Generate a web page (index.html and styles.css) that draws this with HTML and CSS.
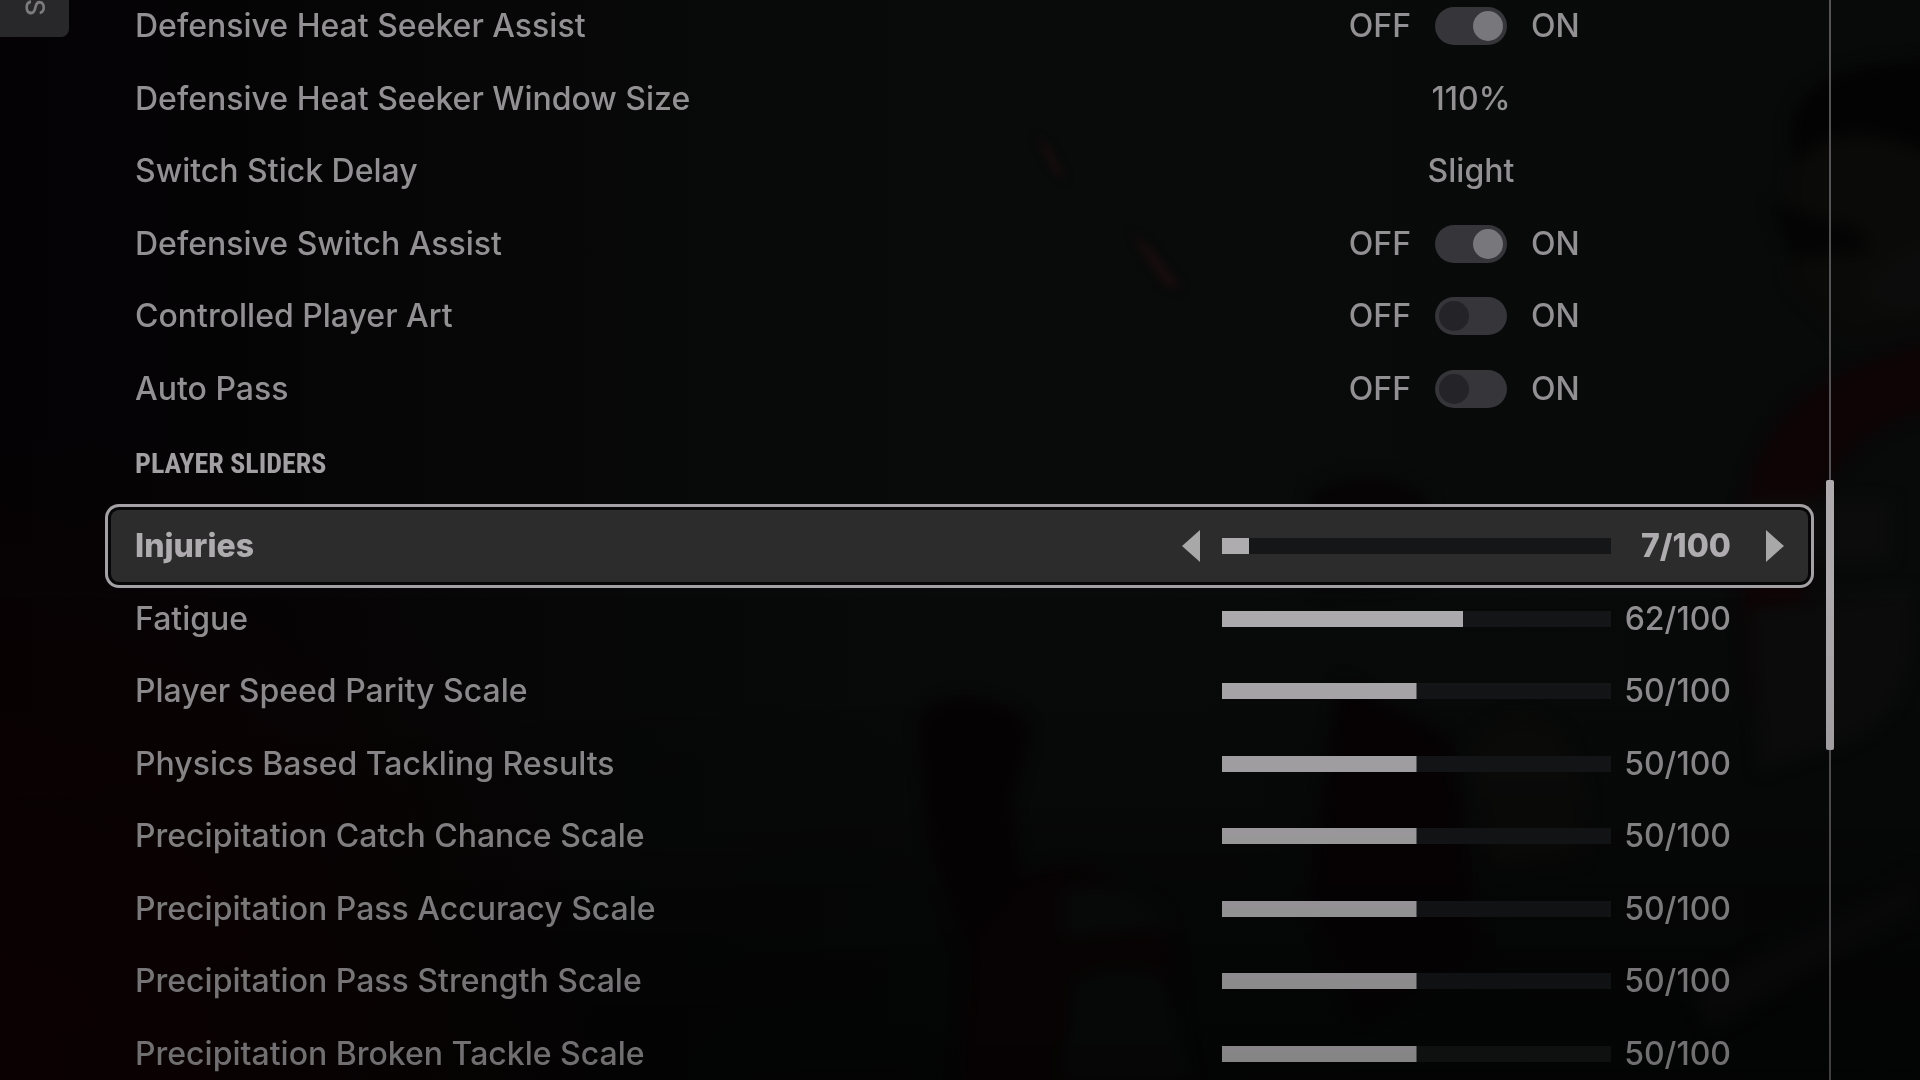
FILE: index.html
```html
<!DOCTYPE html>
<html lang="en">
<head>
  <meta charset="UTF-8">
  <title>Gameplay Settings</title>
  <link rel="stylesheet" href="styles.css">
</head>
<body>
  <svg class="backdrop" viewBox="0 0 1920 1080" preserveAspectRatio="xMidYMid slice" aria-hidden="true">
    <defs>
      <filter id="soft" color-interpolation-filters="sRGB"><feGaussianBlur stdDeviation="8"/></filter>
      <filter id="spark" color-interpolation-filters="sRGB"><feGaussianBlur stdDeviation="4"/></filter>
    </defs>
    <g filter="url(#spark)" fill="#190d0e">
      <path d="M1036 136l14 12 16 32-12-8z"/>
      <path d="M1132 232l22 20 28 36-16-2-24-34z"/>
    </g>
    <g filter="url(#soft)">
      <!-- player on the right -->
      <path d="M1790 130C1800 80 1850 60 1940 60v130c-60-20-110-20-140 20z" fill="#040304"/>
      <path d="M1790 170c40-50 90-40 150-10v160l-90 20-60-60z" fill="#0a0a08"/>
      <path d="M1770 200c20 10 60 20 90 30l10 20-80 10z" fill="#040405"/>
      <path d="M1740 560c0-130 60-190 200-220v70c-70 10-120 50-130 140l-10 190-50-40z" fill="#0e0406"/>
      <path d="M1860 290c20-30 60-50 80-50v60c-20 20-60 20-80-10z" fill="#0c0c0c"/>
      <path d="M1750 500h140v60h-140z" fill="#0c0c0c"/>
      <path d="M1750 610l160-20c10 60 0 120-60 150l-90 30z" fill="#0c0c0c"/>
      <path d="M1690 990l230-120v40l-210 120z" fill="#0a0a0b"/>
      <!-- player by the sliders -->
      <path d="M1310 500c20-30 110-30 120 10l-10 70-100 10z" fill="#060404"/>
      <path d="M1470 750c20-40 80-50 100 0 20 40 20 70 10 110l-90 10z" fill="#0b0b0a"/>
      <path d="M1340 680l110 60 30 220-120 60-50-120z" fill="#070305"/>
      <!-- player in the middle -->
      <path d="M920 720c20-30 80-30 110 10l-20 70 10 100-50 60-40-120z" fill="#060304"/>
      <path d="M1020 880c60-30 110-10 150 60l20 160h-230l10-160z" fill="#090304"/>
      <path d="M1060 890c50-20 90 0 110 40l-110 10z" fill="#090a0a"/>
      <path d="M1060 1080l10-100c30-20 80-20 100 0l20 100z" fill="#080909"/>
    </g>
  </svg>

  <div class="screen">
    <nav class="side">
      <a class="tab" href="#settings">S</a>
    </nav>

    <main class="settings" id="settings">
      <div class="rows">
        <div class="row">
          <label for="heatSeeker">Defensive Heat Seeker Assist</label>
          <div class="switch"><span>OFF</span><input type="checkbox" id="heatSeeker" checked><span>ON</span></div>
        </div>
        <div class="row">
          <span id="windowSize">Defensive Heat Seeker Window Size</span>
          <output class="choice" aria-labelledby="windowSize">110%</output>
        </div>
        <div class="row">
          <span id="stickDelay">Switch Stick Delay</span>
          <output class="choice" aria-labelledby="stickDelay">Slight</output>
        </div>
        <div class="row">
          <label for="switchAssist">Defensive Switch Assist</label>
          <div class="switch"><span>OFF</span><input type="checkbox" id="switchAssist" checked><span>ON</span></div>
        </div>
        <div class="row">
          <label for="playerArt">Controlled Player Art</label>
          <div class="switch"><span>OFF</span><input type="checkbox" id="playerArt"><span>ON</span></div>
        </div>
        <div class="row">
          <label for="autoPass">Auto Pass</label>
          <div class="switch"><span>OFF</span><input type="checkbox" id="autoPass"><span>ON</span></div>
        </div>
      </div>

      <h2>PLAYER SLIDERS</h2>

      <div class="rows">
        <div class="row selected">
          <label for="injuries">Injuries</label>
          <div class="slider">
            <button class="arrow" aria-label="Decrease"><svg viewBox="0 0 18 32"><path d="M18 0v32L0 16z"/></svg></button>
            <input type="range" id="injuries" min="0" max="100" value="7" style="--fill: 7%">
            <output for="injuries">7/100</output>
            <button class="arrow next" aria-label="Increase"><svg viewBox="0 0 18 32"><path d="M0 0v32l18-16z"/></svg></button>
          </div>
        </div>
        <div class="row">
          <label for="fatigue">Fatigue</label>
          <div class="slider">
            <input type="range" id="fatigue" min="0" max="100" value="62" style="--fill: 62%">
            <output for="fatigue">62/100</output>
          </div>
        </div>
        <div class="row">
          <label for="speedParity">Player Speed Parity Scale</label>
          <div class="slider">
            <input type="range" id="speedParity" min="0" max="100" value="50" style="--fill: 50%">
            <output for="speedParity">50/100</output>
          </div>
        </div>
        <div class="row">
          <label for="tackling">Physics Based Tackling Results</label>
          <div class="slider">
            <input type="range" id="tackling" min="0" max="100" value="50" style="--fill: 50%">
            <output for="tackling">50/100</output>
          </div>
        </div>
        <div class="row">
          <label for="catchChance">Precipitation Catch Chance Scale</label>
          <div class="slider">
            <input type="range" id="catchChance" min="0" max="100" value="50" style="--fill: 50%">
            <output for="catchChance">50/100</output>
          </div>
        </div>
        <div class="row">
          <label for="passAccuracy">Precipitation Pass Accuracy Scale</label>
          <div class="slider">
            <input type="range" id="passAccuracy" min="0" max="100" value="50" style="--fill: 50%">
            <output for="passAccuracy">50/100</output>
          </div>
        </div>
        <div class="row">
          <label for="passStrength">Precipitation Pass Strength Scale</label>
          <div class="slider">
            <input type="range" id="passStrength" min="0" max="100" value="50" style="--fill: 50%">
            <output for="passStrength">50/100</output>
          </div>
        </div>
        <div class="row">
          <label for="brokenTackle">Precipitation Broken Tackle Scale</label>
          <div class="slider">
            <input type="range" id="brokenTackle" min="0" max="100" value="50" style="--fill: 50%">
            <output for="brokenTackle">50/100</output>
          </div>
        </div>
      </div>
    </main>

    <div class="scrollbar"><div class="thumb"></div></div>
  </div>

  <script>
    document.querySelectorAll('input[type="range"]').forEach(slider => {
      const output = document.querySelector('output[for="' + slider.id + '"]');
      slider.addEventListener("input", () => {
        slider.style.setProperty("--fill", slider.value + "%");
        output.value = slider.value + "/100";
      });
    });

    document.querySelectorAll(".arrow").forEach(arrow => {
      arrow.addEventListener("click", () => {
        const slider = arrow.parentElement.querySelector("input");
        slider.value = Number(slider.value) + (arrow.classList.contains("next") ? 1 : -1);
        slider.dispatchEvent(new Event("input"));
      });
    });
  </script>
</body>
</html>
```
FILE: styles.css
```css
* {
  box-sizing: border-box;
}
body {
  margin: 0;
  height: 100vh;
  overflow: hidden;
  background:
    radial-gradient(circle at 0 100%, #100203, transparent 30%),
    linear-gradient(transparent 60%, rgba(0, 0, 0, 0.4)),
    linear-gradient(90deg, #040204, #070707 25%, #090a0a 50%, #080909);
  color: #929092;
  font-family: Inter, "Liberation Sans", sans-serif;
  font-size: 32px;
  font-weight: 500;
  line-height: 40px;
}
/* everything fades towards the bottom of the screen */
body::after {
  content: "";
  position: fixed;
  inset: 0;
  background: linear-gradient(transparent 55%, rgba(0, 0, 0, 0.24));
  pointer-events: none;
}
.backdrop {
  position: fixed;
  inset: 0;
  width: 100%;
  height: 100%;
}
.screen {
  position: relative;
  display: grid;
  grid-template-columns: 111px 1fr 112px;
  grid-template-rows: 100vh;
}
.tab {
  display: flex;
  justify-content: flex-end;
  align-items: center;
  width: 69px;
  height: 37px;
  padding-bottom: 21px;
  border-bottom-right-radius: 8px;
  background: #28282b;
  color: #7c7a7c;
  font-size: 26px;
  writing-mode: vertical-rl;
  text-decoration: none;
}
.settings {
  margin-top: -10px;
}
.rows {
  display: grid;
  grid-auto-rows: 72px 73px;
}
.row {
  display: grid;
  grid-template-columns: 1fr 674px;
  align-items: center;
  padding-left: 24px;
}
h2 {
  margin: 0;
  padding: 19px 24px 26px;
  color: #a3a0a3;
  font-family: "Roboto Condensed", Roboto, sans-serif;
  font-size: 28px;
  line-height: 40px;
}
.selected {
  border-radius: 8px;
  background: #2d2c2d;
  box-shadow: 0 0 0 3px #060606, 0 0 0 6px #a3a1a3;
  color: #aeacae;
  font-weight: 800;
}
.choice {
  text-align: center;
}
.switch {
  display: grid;
  grid-template-columns: 1fr 72px 1fr;
  align-items: center;
  gap: 24px;
}
.switch span:first-child {
  text-align: right;
}
.switch input {
  appearance: none;
  width: 72px;
  height: 38px;
  margin: 0;
  padding: 4px;
  border-radius: 19px;
  background: #35353a;
}
.switch input::before {
  content: "";
  display: block;
  width: 30px;
  height: 30px;
  border-radius: 15px;
  background: #242428;
}
.switch input:checked::before {
  margin-left: auto;
  background: #78777b;
}
.slider {
  display: grid;
  grid-template-columns: 40px 1fr 120px 53px;
  align-items: center;
  padding: 0 24px 0 48px;
}
.slider input {
  grid-column: 2;
  appearance: none;
  width: 100%;
  height: 16px;
  margin: 0;
  background: linear-gradient(#aeacae, #aeacae) 0 / var(--fill) 100% no-repeat #141617;
}
.slider input::-webkit-slider-thumb {
  appearance: none;
  width: 1px;
  height: 16px;
}
.slider output {
  text-align: right;
}
.arrow {
  width: 18px;
  height: 32px;
  padding: 0;
  border: 0;
  background: none;
}
.next {
  justify-self: end;
}
.arrow svg {
  display: block;
  fill: #a9a8a9;
}
.scrollbar {
  display: grid;
  grid-template-rows: 16fr 9fr 11fr;
  width: 8px;
  margin-left: 18px;
  background: linear-gradient(#555355, #555355) center / 2px 100% no-repeat;
}
.thumb {
  grid-row: 2;
  border-radius: 2px;
  background: #aeaaae;
}
```
